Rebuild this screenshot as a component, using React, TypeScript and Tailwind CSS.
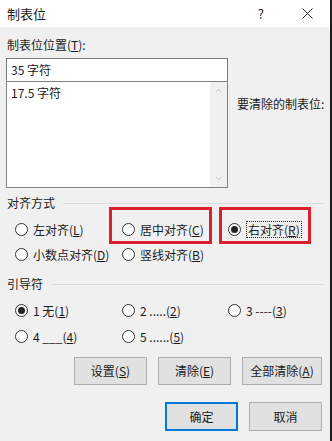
import React from "react";
import { ChevronUp, ChevronDown } from "lucide-react";

const font = { fontFamily: '"Noto Sans CJK SC", "Noto Sans", sans-serif' };

function Radio({ checked }: { checked?: boolean }) {
  return (
    <span className="w-[13px] h-[13px] rounded-full border border-[#333] bg-white flex items-center justify-center shrink-0">
      {checked && <span className="w-[7px] h-[7px] rounded-full bg-[#222]" />}
    </span>
  );
}

function Option({
  label,
  checked,
  focus,
}: {
  label: React.ReactNode;
  checked?: boolean;
  focus?: boolean;
}) {
  return (
    <div className="flex items-center gap-[5px]">
      <Radio checked={checked} />
      <span className={focus ? "border border-dotted border-[#222] px-px leading-[15px]" : "leading-[15px]"}>
        {label}
      </span>
    </div>
  );
}

function GroupLabel({ text }: { text: string }) {
  return (
    <div className="flex items-center h-[16px] pl-[7px] pr-[7px]">
      <span>{text}</span>
      <div className="flex-1 h-px bg-[#dcdcdc] ml-[8px]" />
    </div>
  );
}

function Button({ children, primary }: { children: React.ReactNode; primary?: boolean }) {
  return (
    <div
      className={
        "flex-1 flex items-center justify-center bg-[#e1e1e1] " +
        (primary ? "border-2 border-[#0078d7]" : "border border-[#adadad]")
      }
    >
      {children}
    </div>
  );
}

export default function App() {
  return (
    <div
      style={font}
      className="w-[332px] h-[441px] bg-[#f0f0f0] text-[12px] text-[#1a1a1a] border-r-2 border-[#1e1e1e] flex flex-col overflow-hidden"
    >
      {/* Title bar */}
      <div className="h-[27px] bg-white flex items-center pl-[7px] pr-[17px] shrink-0">
        <span className="text-[13px]">制表位</span>
        <span className="ml-auto text-[13px] mr-[38px]">?</span>
        <svg width="11" height="11" viewBox="0 0 11 11">
          <path d="M0.5 0.5 L10.5 10.5 M10.5 0.5 L0.5 10.5" stroke="#222" strokeWidth="1" />
        </svg>
      </div>

      {/* Tab position */}
      <div className="mt-[10px] h-[16px] pl-[7px] leading-[16px]">
        制表位位置(<u>T</u>):
      </div>
      <div className="flex pl-[6px]">
        <div className="w-[222px] flex flex-col">
          <div className="mt-[5px] h-[24px] bg-white border border-[#7a7a7a] flex items-center pl-[4px]">
            35 字符
          </div>
          <div className="-mt-px h-[107px] bg-white border border-[#828282] flex">
            <div className="flex-1 pl-[4px] pt-[2px]">17.5 字符</div>
            <div className="w-[17px] bg-[#f0f0f0] flex flex-col items-center justify-between py-[4px]">
              <ChevronUp size={9} color="#b0b0b0" strokeWidth={2} />
              <ChevronDown size={9} color="#b0b0b0" strokeWidth={2} />
            </div>
          </div>
        </div>
        <div className="pl-[9px] pt-[42px]">要清除的制表位:</div>
      </div>

      {/* Alignment */}
      <div className="mt-[7px]">
        <GroupLabel text="对齐方式" />
      </div>
      <div className="mt-[6px] grid grid-cols-[107px_106px_1fr] pl-[15px]">
        <div className="h-[25px] flex items-center">
          <Option label={<>左对齐(<u>L</u>)</>} />
        </div>
        <div className="h-[25px] flex items-center relative">
          <span className="absolute left-[-13px] top-[-10px] w-[103px] h-[37px] border-[3px] border-[#d9202c]" />
          <Option label={<>居中对齐(<u>C</u>)</>} />
        </div>
        <div className="h-[25px] flex items-center relative">
          <span className="absolute left-[-9px] top-[-10px] w-[92px] h-[37px] border-[3px] border-[#d9202c]" />
          <Option checked focus label={<>右对齐(<u>R</u>)</>} />
        </div>
        <div className="h-[25px] flex items-center">
          <Option label={<>小数点对齐(<u>D</u>)</>} />
        </div>
        <div className="h-[25px] flex items-center">
          <Option label={<>竖线对齐(<u>B</u>)</>} />
        </div>
      </div>

      {/* Leader */}
      <div className="mt-[9px]">
        <GroupLabel text="引导符" />
      </div>
      <div className="mt-[6px] grid grid-cols-[107px_106px_1fr] pl-[15px]">
        <div className="h-[25px] flex items-center">
          <Option checked label={<>1 无(<u>1</u>)</>} />
        </div>
        <div className="h-[25px] flex items-center">
          <Option label={<>2 .....(<u>2</u>)</>} />
        </div>
        <div className="h-[25px] flex items-center">
          <Option label={<>3 ----(<u>3</u>)</>} />
        </div>
        <div className="h-[26px] flex items-center">
          <Option label={<>4 ___(<u>4</u>)</>} />
        </div>
        <div className="h-[26px] flex items-center">
          <Option label={<>5 ......(<u>5</u>)</>} />
        </div>
      </div>

      {/* Buttons */}
      <div className="mt-[8px] h-[28px] flex justify-end gap-[11px] pr-[8px]">
        <div className="w-[73px] flex">
          <Button>
            设置(<u>S</u>)
          </Button>
        </div>
        <div className="w-[73px] flex">
          <Button>
            清除(<u>E</u>)
          </Button>
        </div>
        <div className="w-[80px] flex">
          <Button>
            全部清除(<u>A</u>)
          </Button>
        </div>
      </div>
      <div className="mt-[17px] h-[29px] flex justify-end gap-[11px] pr-[8px]">
        <div className="w-[73px] flex">
          <Button primary>确定</Button>
        </div>
        <div className="w-[73px] flex">
          <Button>取消</Button>
        </div>
      </div>
    </div>
  );
}
